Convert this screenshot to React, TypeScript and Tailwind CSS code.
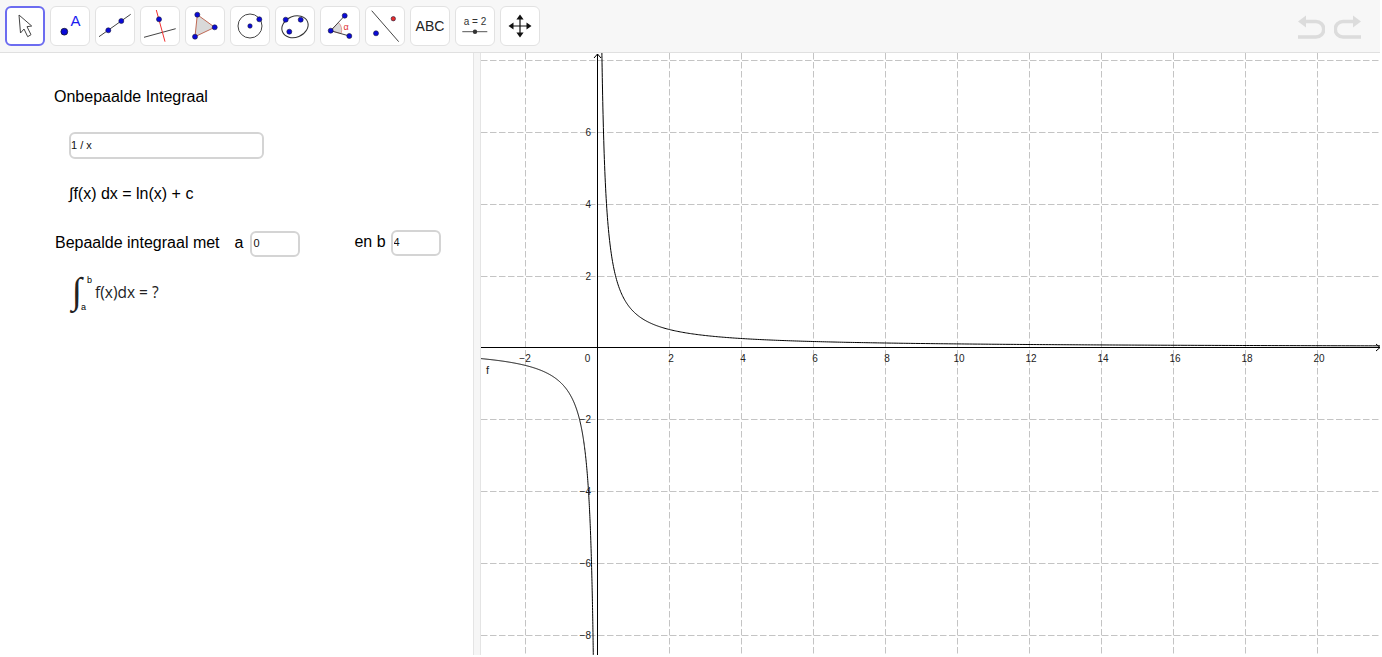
import type { ReactNode } from "react"

const BLUE = "#0a0ad8"

function Dot({ x, y, r = 2.5, fill = BLUE }: { x: number; y: number; r?: number; fill?: string }) {
  return <circle cx={x} cy={y} r={r} fill={fill} stroke="#1c1c3a" strokeWidth={0.6} />
}

function ToolButton({ active, children }: { active?: boolean; children: ReactNode }) {
  return (
    <div
      className={
        active
          ? "flex h-10 w-10 shrink-0 items-center justify-center rounded-md border-2 border-[#6c6cf0] bg-white"
          : "flex h-10 w-10 shrink-0 items-center justify-center rounded-md border border-[#e2e2e2] bg-white"
      }
    >
      {children}
    </div>
  )
}

function Icon({ children }: { children: ReactNode }) {
  return (
    <svg viewBox="0 0 40 40" className="h-10 w-10 shrink-0" fill="none">
      {children}
    </svg>
  )
}

function Toolbar() {
  return (
    <div className="flex h-[53px] shrink-0 items-start justify-between border-b border-[#e0e0e0] bg-[#f7f7f7] pl-[5px] pt-[6px] pr-[18px]">
      <div className="flex gap-[5px]">
        <ToolButton active>
          <Icon>
            <path d="M14 9 L26.7 20 L22 20.7 L26 28.7 L22.7 30.7 L19 23 L15.5 27 Z" fill="#fff" stroke="#444" strokeWidth={1} strokeLinejoin="round" />
          </Icon>
        </ToolButton>
        <ToolButton>
          <Icon>
            <circle cx={14.3} cy={25.7} r={3.4} fill={BLUE} stroke="#15152a" strokeWidth={0.8} />
            <text x={20.5} y={19.7} fontSize={15} fill="#1a1af0" fontFamily="Liberation Sans, sans-serif">A</text>
          </Icon>
        </ToolButton>
        <ToolButton>
          <Icon>
            <line x1={4} y1={30.7} x2={35.7} y2={8.3} stroke="#444" strokeWidth={1} />
            <Dot x={13.3} y={24.3} />
            <Dot x={26.3} y={15} />
          </Icon>
        </ToolButton>
        <ToolButton>
          <Icon>
            <line x1={4} y1={31.3} x2={35.7} y2={22.7} stroke="#444" strokeWidth={1} />
            <line x1={16.3} y1={4} x2={25} y2={35.7} stroke="#f03030" strokeWidth={1} />
            <Dot x={19} y={13.3} />
          </Icon>
        </ToolButton>
        <ToolButton>
          <Icon>
            <path d="M12.3 8.7 L29.7 21.3 L10 30.7 Z" fill="#d9d9d9" stroke="#c06a55" strokeWidth={1} />
            <Dot x={12.3} y={8.7} />
            <Dot x={29.7} y={21.3} />
            <Dot x={10} y={30.7} />
          </Icon>
        </ToolButton>
        <ToolButton>
          <Icon>
            <circle cx={20} cy={20} r={12} stroke="#444" strokeWidth={1} />
            <Dot x={20} y={20} r={2.2} />
            <Dot x={29.3} y={13.3} />
          </Icon>
        </ToolButton>
        <ToolButton>
          <Icon>
            <ellipse cx={20} cy={20.7} rx={13.5} ry={10.5} transform="rotate(-22 20 20.7)" stroke="#333" strokeWidth={1} />
            <Dot x={10.7} y={13.7} />
            <Dot x={25.7} y={13.7} />
            <Dot x={14.3} y={25.7} />
          </Icon>
        </ToolButton>
        <ToolButton>
          <Icon>
            <path d="M10.7 24.7 L18.5 16.5 A11 11 0 0 1 21 27.7 Z" fill="#d9d9d9" stroke="#e08a8a" strokeWidth={0.8} />
            <line x1={10.7} y1={24.7} x2={24.7} y2={9.7} stroke="#444" strokeWidth={1} />
            <line x1={10.7} y1={24.7} x2={29.3} y2={30} stroke="#444" strokeWidth={1} />
            <Dot x={10.7} y={24.7} />
            <Dot x={24.7} y={9.7} />
            <Dot x={29.3} y={30} />
            <text x={23.5} y={23.5} fontSize={9} fill="#e03030" fontFamily="Liberation Sans, sans-serif">α</text>
          </Icon>
        </ToolButton>
        <ToolButton>
          <Icon>
            <line x1={6.7} y1={4.7} x2={33.7} y2={35.7} stroke="#444" strokeWidth={1} />
            <Dot x={28.3} y={12.7} r={2.2} fill="#e62b2b" />
            <Dot x={11} y={27.3} />
          </Icon>
        </ToolButton>
        <ToolButton>
          <span className="text-sm text-[#222]">ABC</span>
        </ToolButton>
        <ToolButton>
          <Icon>
            <text x={20} y={19} fontSize={10} textAnchor="middle" fill="#333" fontFamily="Liberation Sans, sans-serif">a = 2</text>
            <line x1={7.3} y1={25.7} x2={32.3} y2={25.7} stroke="#555" strokeWidth={1} />
            <circle cx={20} cy={25.7} r={2.2} fill="#333" />
          </Icon>
        </ToolButton>
        <ToolButton>
          <Icon>
            <path d="M20 12 V28 M12 20 H28" stroke="#111" strokeWidth={1.2} />
            <path d="M20 8.5 L23.6 13.5 H16.4 Z M20 31.5 L23.6 26.5 H16.4 Z M8.5 20 L13.5 16.4 V23.6 Z M31.5 20 L26.5 16.4 V23.6 Z" fill="#111" />
          </Icon>
        </ToolButton>
      </div>
      <div className="flex gap-[9px] pt-[9px]">
        <svg viewBox="0 0 28 24" className="h-6 w-7" fill="none" stroke="#dcdcdc" strokeWidth={3.6}>
          <path d="M5 6.5 H19 A7.7 7.7 0 0 1 19 22 H1" />
          <path d="M9 0.5 L1 6.5 L9 12.5 Z" fill="#dcdcdc" stroke="none" />
        </svg>
        <svg viewBox="0 0 28 24" className="h-6 w-7" fill="none" stroke="#dcdcdc" strokeWidth={3.6}>
          <path d="M23 6.5 H9 A7.7 7.7 0 0 0 9 22 H27" />
          <path d="M19 0.5 L27 6.5 L19 12.5 Z" fill="#dcdcdc" stroke="none" />
        </svg>
      </div>
    </div>
  )
}

function Field({ value, className }: { value: string; className: string }) {
  return (
    <input
      readOnly
      value={value}
      className={`rounded-md border-2 border-[#d4d4d4] bg-white pb-[2px] text-[11px] text-[#111] outline-none ${className}`}
    />
  )
}

function LeftPanel() {
  return (
    <div className="flex w-[473px] shrink-0 flex-col bg-white text-base text-black">
      <div className="ml-[54px] mt-[34px] leading-5">Onbepaalde Integraal</div>
      <Field value="1 / x" className="ml-[69px] mt-[25px] h-[27px] w-[195px]" />
      <div className="ml-[69px] mt-[25px] leading-5">∫f(x) dx = ln(x) + c</div>
      <div className="ml-[55px] mt-[26px] flex h-[27px] items-start">
        <span className="mt-[3px] leading-5">Bepaalde integraal met</span>
        <span className="ml-[15px] mt-[3px] leading-5">a</span>
        <Field value="0" className="ml-[7px] mt-[1px] h-[26px] w-[50px] pl-[1px]" />
        <span className="ml-[54px] mt-[2px] leading-5">en b</span>
        <Field value="4" className="ml-[5px] h-[26px] w-[50px] pl-[1px]" />
      </div>
      <div className="ml-[72px] mt-[15px] flex h-[40px] items-center">
        <span className="mt-[-2px] w-[10px] font-['Liberation_Serif',serif] text-[37px] leading-10 text-[#222]">∫</span>
        <div className="mt-[4px] flex h-[40px] w-[13px] flex-col justify-between py-[1px] text-[9px] leading-[11px]">
          <span className="ml-[5px]">b</span>
          <span className="ml-[-1px]">a</span>
        </div>
        <span className="font-['Open_Sans',sans-serif] text-[15.5px] leading-5 text-[#222]">f(x)dx = ?</span>
      </div>
    </div>
  )
}

const OX = 597.5
const OY = 347.5
const UX = 36
const UY = 35.9

const xTicks = [-2, 2, 4, 6, 8, 10, 12, 14, 16, 18, 20]
const yTicks = [8, 6, 4, 2, -2, -4, -6, -8]

function curve(from: number, to: number) {
  const pts: string[] = []
  const n = 400
  for (let i = 0; i <= n; i++) {
    // denser near the asymptote
    const t = i / n
    const px = from + (to - from) * t * t
    const v = (px - OX) / UX
    pts.push(`${px.toFixed(2)} ${(OY - UY / v).toFixed(2)}`)
  }
  return "M" + pts.join(" L")
}

function snap(v: number) {
  return Math.round(v) + 0.5
}

function Graph() {
  return (
    <svg viewBox="481 53 899 602" className="h-full min-w-0 flex-1 bg-white" fontFamily="Liberation Sans, sans-serif">
      {xTicks.map((k) => (
        <line key={k} x1={OX + k * UX} x2={OX + k * UX} y1={53} y2={655} stroke="#c4c4c4" strokeDasharray="6.5 2.5" />
      ))}
      {yTicks.map((k) => (
        <line key={k} x1={481} x2={1380} y1={snap(OY - k * UY)} y2={snap(OY - k * UY)} stroke="#c4c4c4" strokeDasharray="6.5 2.5" />
      ))}
      <line x1={OX} x2={OX} y1={54} y2={655} stroke="#000" />
      <line x1={481} x2={1380} y1={OY} y2={OY} stroke="#000" />
      <path d={`M${OX - 3.5} 58 L${OX} 54 L${OX + 3.5} 58`} stroke="#000" fill="none" />
      <path d={`M1376 ${OY - 3.5} L1380 ${OY} L1376 ${OY + 3.5}`} stroke="#000" fill="none" />
      <path d={curve(OX + 4.3, 1380)} stroke="#000" fill="none" />
      <path d={curve(OX - 3.9, 481)} stroke="#000" fill="none" />
      {xTicks.map((k) => (
        <text key={k} x={OX + k * UX + (k < 0 ? -0.5 : 1.5)} y={361.5} fontSize={10} textAnchor="middle" fill="#222">
          {k < 0 ? `−${-k}` : k}
        </text>
      ))}
      <text x={587.5} y={361.5} fontSize={10} textAnchor="middle" fill="#222">0</text>
      {yTicks.filter((k) => k !== 8).map((k) => (
        <text key={k} x={591} y={snap(OY - k * UY) + 3.5} fontSize={10} textAnchor="end" fill="#222">
          {k < 0 ? `−${-k}` : k}
        </text>
      ))}
      <text x={486} y={374} fontSize={11} fill="#222">f</text>
    </svg>
  )
}

export default function App() {
  return (
    <div className="flex h-[655px] w-[1380px] flex-col overflow-hidden bg-white font-['Liberation_Sans',Arial,sans-serif]">
      <Toolbar />
      <div className="flex min-h-0 flex-1">
        <LeftPanel />
        <div className="w-2 shrink-0 border-x border-[#e4e4e4] bg-[#f6f6f6]" />
        <Graph />
      </div>
    </div>
  )
}
